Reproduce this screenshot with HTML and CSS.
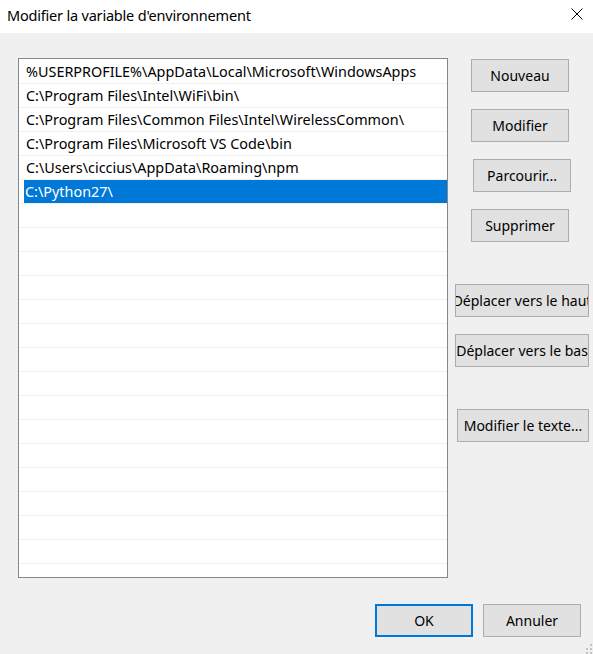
FILE: index.html
```html
<!DOCTYPE html>
<html lang="fr">
<head>
<meta charset="utf-8">
<title>Modifier la variable d'environnement</title>
<link rel="stylesheet" href="styles.css">
</head>
<body>
<div class="window">
  <div class="titlebar">
    <span class="title">Modifier la variable d'environnement</span>
    <svg class="close" width="12" height="12" viewBox="0 0 12 12" aria-hidden="true">
      <path d="M0.5 0.5 L11.5 11.5 M11.5 0.5 L0.5 11.5" stroke="#000" stroke-width="1" fill="none"/>
    </svg>
  </div>
  <div class="content">
    <div class="main">
      <div class="list">
        <div class="row"><div class="cell">%USERPROFILE%\AppData\Local\Microsoft\WindowsApps</div></div>
        <div class="row"><div class="cell">C:\Program Files\Intel\WiFi\bin\</div></div>
        <div class="row"><div class="cell">C:\Program Files\Common Files\Intel\WirelessCommon\</div></div>
        <div class="row"><div class="cell">C:\Program Files\Microsoft VS Code\bin</div></div>
        <div class="row"><div class="cell">C:\Users\ciccius\AppData\Roaming\npm</div></div>
        <div class="row"><div class="cell selected">C:\Python27\</div></div>
        <div class="row"><div class="cell"></div></div>
        <div class="row"><div class="cell"></div></div>
        <div class="row"><div class="cell"></div></div>
        <div class="row"><div class="cell"></div></div>
        <div class="row"><div class="cell"></div></div>
        <div class="row"><div class="cell"></div></div>
        <div class="row"><div class="cell"></div></div>
        <div class="row"><div class="cell"></div></div>
        <div class="row"><div class="cell"></div></div>
        <div class="row"><div class="cell"></div></div>
        <div class="row"><div class="cell"></div></div>
        <div class="row"><div class="cell"></div></div>
        <div class="row"><div class="cell"></div></div>
        <div class="row"><div class="cell"></div></div>
        <div class="row"><div class="cell"></div></div>
        <div class="row"><div class="cell"></div></div>
      </div>
      <div class="side">
        <button class="btn b-std">Nouveau</button>
        <button class="btn b-std gap-s">Modifier</button>
        <button class="btn b-browse gap-s">Parcourir...</button>
        <button class="btn b-std gap-s">Supprimer</button>
        <button class="btn b-move gap-l">Déplacer vers le haut</button>
        <button class="btn b-move gap-s">Déplacer vers le bas</button>
        <button class="btn b-text gap-l">Modifier le texte...</button>
      </div>
    </div>
    <div class="footer">
      <button class="btn b-foot ok">OK</button>
      <button class="btn b-foot">Annuler</button>
    </div>
  </div>
  <svg class="grip" width="8" height="10" viewBox="0 0 8 10" aria-hidden="true">
    <rect x="5" y="0" width="2" height="2" fill="#c4c4c4"/>
    <rect x="1" y="4" width="2" height="2" fill="#c4c4c4"/>
    <rect x="5" y="4" width="2" height="2" fill="#c4c4c4"/>
    <rect x="1" y="8" width="2" height="2" fill="#c4c4c4"/>
    <rect x="5" y="8" width="2" height="2" fill="#c4c4c4"/>
  </svg>
</div>
</body>
</html>
```
FILE: styles.css
```css
html, body {
  margin: 0;
  padding: 0;
}
body {
  background: #f0f0f0;
  font-family: "Noto Sans", "Open Sans", sans-serif;
  font-size: 14px;
  color: #000;
}
.window {
  position: relative;
  width: 593px;
  height: 654px;
  overflow: hidden;
  background: #f0f0f0;
}
.titlebar {
  height: 33px;
  background: #fff;
  display: flex;
  justify-content: space-between;
  align-items: flex-start;
}
.title {
  font-size: 14.5px;
  letter-spacing: -0.2px;
  line-height: 20px;
  margin-top: 5px;
  padding-left: 7px;
}
.close {
  margin-top: 8px;
  margin-right: 10px;
  display: block;
}
.main {
  margin-top: 25px;
  display: flex;
  align-items: flex-start;
}
.list {
  margin-left: 18px;
  width: 430px;
  height: 520px;
  box-sizing: border-box;
  border: 1px solid #828790;
  background: #fff;
  padding: 1px 0 0 1px;
  overflow: hidden;
}
.row {
  height: 24px;
  box-sizing: border-box;
  border-bottom: 1px solid #f0f0f0;
}
.cell {
  margin-left: 4px;
  height: 23px;
  line-height: 23px;
  padding-left: 2px;
  white-space: nowrap;
  font-size: 14.4px;
}
.cell.selected {
  background: #0078d7;
  color: #fff;
  padding-left: 1px;
}
.side {
  display: flex;
  flex-direction: column;
  align-items: flex-start;
  padding-top: 1px;
}
.btn {
  height: 33px;
  box-sizing: border-box;
  border: 1px solid #adadad;
  background: #e1e1e1;
  color: #000;
  font: inherit;
  padding: 0;
  margin: 0;
  display: flex;
  align-items: center;
  justify-content: center;
  white-space: nowrap;
  overflow: hidden;
}
.b-std {
  width: 98px;
  margin-left: 23px;
}
.b-browse {
  width: 98px;
  margin-left: 25px;
}
.b-move {
  width: 134px;
  margin-left: 7px;
}
.b-text {
  width: 132px;
  margin-left: 9px;
}
.gap-s {
  margin-top: 17px;
}
.gap-l {
  margin-top: 42px;
}
.footer {
  margin-top: 26px;
  display: flex;
  justify-content: flex-end;
  gap: 10px;
  padding-right: 12px;
}
.b-foot {
  width: 98px;
}
.b-foot.ok {
  border: 2px solid #0078d7;
}
.grip {
  position: absolute;
  right: 0;
  bottom: 0;
}
```
